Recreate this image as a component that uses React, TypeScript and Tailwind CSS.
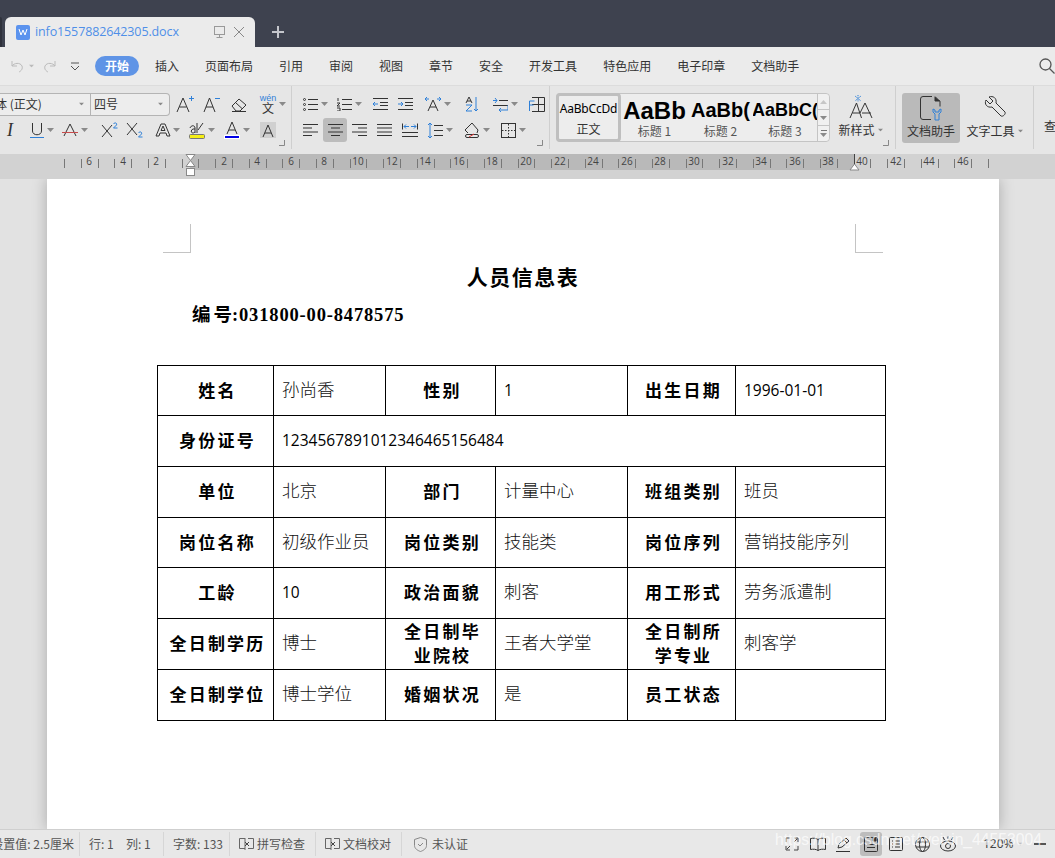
import type { ReactNode } from "react";

const cjk = "font-['Microsoft_YaHei','Noto_Sans_CJK_SC',sans-serif]";
const blue = "#2f80d8";
const ink = "#333";

function Ico({ w = 16, h = 16, children, className = "" }: { w?: number; h?: number; children: ReactNode; className?: string }) {
  return (
    <svg width={w} height={h} viewBox={`0 0 ${w} ${h}`} fill="none" stroke={ink} strokeWidth="1" className={`shrink-0 ${className}`}>
      {children}
    </svg>
  );
}

function Caret({ className = "" }: { className?: string }) {
  return (
    <svg width="7" height="4" viewBox="0 0 7 4" className={`shrink-0 ${className}`}>
      <path d="M0 0h7L3.5 4z" fill="#8a8a8a" />
    </svg>
  );
}

const menus = ["插入", "页面布局", "引用", "审阅", "视图", "章节", "安全", "开发工具", "特色应用", "电子印章", "文档助手"];

function TitleBar() {
  return (
    <div className="h-[47px] bg-[#3e424f] flex items-end shrink-0">
      <div className="w-[2px] h-[30px] bg-[#2f323c] rounded-tr" />
      <div className="ml-[3px] w-[250px] h-[30px] bg-[#ebebeb] rounded-t-[6px] flex items-center pl-[11px]">
        <div className="w-[14px] h-[15px] bg-[#5b93ee] rounded-[2px] flex items-center justify-center">
          <svg width="10" height="8" viewBox="0 0 10 8" fill="none" stroke="#fff" strokeWidth="1">
            <path d="M1 1l2 6 2-5 2 5 2-6" />
          </svg>
        </div>
        <span className="ml-[5px] w-[145px] text-[12.5px] leading-none whitespace-nowrap text-[#4f8fe8] font-['Open_Sans',sans-serif] tracking-[-0.12px]">info1557882642305.docx</span>
        <Ico w={13} h={14} className="ml-[33px]">
          <rect x="1.5" y="1.5" width="10" height="8" stroke="#999" />
          <path d="M6.5 9.5v3M3.5 12.5h6" stroke="#999" />
        </Ico>
        <Ico w={12} h={12} className="ml-[7px]">
          <path d="M1 1l10 10M11 1L1 11" stroke="#888" />
        </Ico>
      </div>
      <svg width="14" height="14" viewBox="0 0 14 14" className="ml-[16px] mb-[8px]" stroke="#c4c6cc" strokeWidth="2">
        <path d="M7 1v12M1 7h12" />
      </svg>
    </div>
  );
}

function MenuBar() {
  return (
    <div className={`relative h-[39px] bg-[#ebebeb] border-b border-[#dcdcdc] flex items-center shrink-0 text-[12px] text-[#333] ${cjk}`}>
      <Ico w={14} h={13} className="ml-[10px]">
        <path d="M2 1v5h5M2 6c2-3 8-4 10 0 1 3-1 5-3 6" stroke="#bbb" />
      </Ico>
      <Caret className="ml-[4px] scale-75 opacity-50" />
      <Ico w={14} h={13} className="ml-[8px]">
        <path d="M12 1v5H7M12 6c-2-3-8-4-10 0-1 3 1 5 3 6" stroke="#bbb" />
      </Ico>
      <Ico w={10} h={9} className="ml-[13px]">
        <path d="M1 1h8M1 4l4 4 4-4" stroke="#555" />
      </Ico>
      <div className="ml-[15px] w-[44px] h-[20px] rounded-full bg-[#5f94e6] text-white flex items-center justify-center font-bold">开始</div>
      <div className="ml-[16px] flex gap-[26px] whitespace-nowrap">
        {menus.map((m) => (
          <span key={m} className="shrink-0">{m}</span>
        ))}
      </div>
      <svg width="16" height="16" viewBox="0 0 16 16" fill="none" stroke="#555" strokeWidth="1.3" className="absolute left-[1039px] top-[11px]">
        <circle cx="6.5" cy="6.5" r="5.5" />
        <path d="M10.5 10.5l5 5" />
      </svg>
    </div>
  );
}

function FontRow() {
  return (
    <div className="flex items-center h-[24px]">
      <div className={`w-[170px] h-[23px] border border-l-0 border-[#b4b4b4] rounded-r-[4px] bg-[#ededed] flex items-center text-[12px] text-[#333] ${cjk}`}>
        <span className="w-[67px] -ml-[5px] whitespace-nowrap">体 (正文)</span>
        <Caret className="ml-[16px] mr-[5px] scale-75" />
        <div className="w-[79px] h-full border-l border-[#b4b4b4] flex items-center pl-[3px] pr-[5px] justify-between text-[12px]">
          四号
          <Caret className="scale-75" />
        </div>
      </div>
      <Ico w={19} h={18} className="ml-[6px]">
        <path d="M1 17L7 3l6 14M3.500 12h7" />
        <path d="M13 3.500h5M15.500 1v5" stroke={blue} />
      </Ico>
      <Ico w={18} h={18} className="ml-[8px]">
        <path d="M1 17L6.500 3 12 17M3 12h7" />
        <path d="M12 3.500h5" stroke={blue} />
      </Ico>
      <Ico w={16} h={15} className="ml-[10px]">
        <path d="M1 9l7-7 7 6-6 6H5z" />
        <path d="M4.500 5.500l6.500 6" />
        <path d="M1 14.500h14" />
      </Ico>
      <div className={`ml-[11px] w-[20px] text-center ${cjk}`}>
        <div className="text-[9px] text-[#2f80d8] font-['Liberation_Sans',sans-serif] leading-[8px]">wén</div>
        <div className="text-[12px] text-[#333] leading-[12px]">文</div>
      </div>
      <Caret className="ml-[1px]" />
    </div>
  );
}

function FormatRow() {
  return (
    <div className="flex items-center h-[24px] mt-[2px]">
      <span className="ml-[7px] w-[10px] font-['Liberation_Serif',serif] italic text-[18px] leading-[18px] text-[#333]">I</span>
      <Ico w={14} h={16} className="ml-[13px]">
        <path d="M2.500 1v8c0 5 9 5 9 0V1" />
        <path d="M0 15.500h14" stroke={blue} />
      </Ico>
      <Caret className="ml-[3px]" />
      <Ico w={16} h={16} className="ml-[8px]">
        <path d="M2 14L8 2l6 12" />
        <path d="M0 10.500h16" stroke="#c64b4b" />
      </Ico>
      <Caret className="ml-[3px]" />
      <Ico w={17} h={16} className="ml-[13px]">
        <path d="M1 3l10 12M11 3L1 15" />
        <path d="M12.500 2c1-2 4-1 3 1l-3 3h4" stroke={blue} />
      </Ico>
      <Ico w={17} h={16} className="ml-[8px]">
        <path d="M1 1l10 12M11 1L1 13" />
        <path d="M12.500 11c1-2 4-1 3 1l-3 3h4" stroke={blue} />
      </Ico>
      <Ico w={16} h={16} className="ml-[12px]">
        <path d="M1 14L6 2h4l5 12h-3l-1-3H5l-1 3zM6 8.500h4L8 4z" />
      </Ico>
      <Caret className="ml-[2px]" />
      <Ico w={16} h={17} className="ml-[9px]">
        <path d="M1 6c1-3 5-3 5 0v5M6 7c-4-1-5 4-2 4 1 0 2-1 2-1M8 1v10M14 1L9 8" />
        <rect x="0.500" y="12.500" width="15" height="4" rx="1" fill="#f5ee16" stroke="#777" />
      </Ico>
      <Caret className="ml-[3px]" />
      <div className="ml-[9px] w-[16px] h-[18px] flex flex-col items-center">
        <Ico w={12} h={13}>
          <path d="M1 13L6 1l5 12M3 9h6" />
        </Ico>
        <div className="w-[16px] h-[4px] mt-[1px] bg-[#0000e6] border border-white" />
      </div>
      <Caret className="ml-[3px]" />
      <div className="ml-[10px] w-[16px] h-[16px] bg-[#d0d0d0] flex items-center justify-center">
        <Ico w={12} h={13}>
          <path d="M1 13L6 1l5 12M3 9h6" />
        </Ico>
      </div>
    </div>
  );
}

function Launcher() {
  return (
    <svg width="6" height="6" viewBox="0 0 6 6" fill="none" stroke="#888" className="absolute right-[6px] bottom-[3px]">
      <path d="M0 5.500h5.500V0" />
    </svg>
  );
}

function ParaRow1() {
  return (
    <div className="flex items-center h-[24px]">
      <Ico w={15} h={14} className="ml-[11px]">
        <path d="M5 2.500h10M5 7.500h10M5 12.500h10" />
        <circle cx="1.500" cy="2.500" r="1" />
        <circle cx="1.500" cy="7.500" r="1" />
        <circle cx="1.500" cy="12.500" r="1" />
      </Ico>
      <Caret className="ml-[3px]" />
      <Ico w={15} h={14} className="ml-[9px]">
        <path d="M5 2.500h10M5 7.500h10M5 12.500h10M1 1v3M0 6h3L0 9h3M0 11h3v3H0" />
      </Ico>
      <Caret className="ml-[3px]" />
      <Ico w={15} h={12} className="ml-[11px]">
        <path d="M0 .5h15M7 4.500h8M7 7.500h8M0 11.500h15" />
        <path d="M5 6H0M2 4L0 6l2 2" stroke={blue} />
      </Ico>
      <Ico w={15} h={12} className="ml-[10px]">
        <path d="M0 .5h15M7 4.500h8M7 7.500h8M0 11.500h15" />
        <path d="M0 6h5M3 4l2 2-2 2" stroke={blue} />
      </Ico>
      <Ico w={16} h={16} className="ml-[12px]">
        <path d="M3 15L8 4l5 11M5 11h6" />
        <path d="M0 3h4M2 1L0 3l2 2M12 3h4M14 1l2 2-2 2" stroke={blue} />
      </Ico>
      <Caret className="ml-[3px]" />
      <Ico w={14} h={16} className="ml-[14px]">
        <path d="M1 7l3-6 3 6M2 5h4" />
        <path d="M1 9h6l-6 6h6" stroke={blue} />
        <path d="M11 1v14M9 13l2 2 2-2" stroke={blue} />
      </Ico>
      <Ico w={15} h={15} className="ml-[14px]">
        <path d="M6 3.500h9M0 8.500h15" />
        <path d="M0 3.500h4M2 1l2 2.500L2 6" stroke={blue} />
        <path d="M15 8v5H6M8 11l-2 2 2 2" stroke={blue} />
      </Ico>
      <Caret className="ml-[3px]" />
      <Ico w={16} h={15} className="ml-[11px]">
        <path d="M3 .5h12.500v14H3M9.500 .5v14M3 7.500h12.500" />
        <path d="M.5 4v10M.5 4h5M.5 8h4" stroke={blue} />
      </Ico>
    </div>
  );
}

function ParaRow2() {
  return (
    <div className="flex items-center h-[24px] mt-[2px]">
      <div className="ml-[11px]">
        <Ico w={15} h={12}>
          <path d="M0 .5h15M0 4h9M0 8h15M0 11.500h9" />
        </Ico>
      </div>
      <div className="ml-[5px] w-[24px] h-[24px] rounded-[3px] bg-[#bcbcbc] flex items-center justify-center">
        <Ico w={15} h={12}>
          <path d="M0 .5h15M3 4h9M0 8h15M3 11.500h9" />
        </Ico>
      </div>
      <Ico w={15} h={12} className="ml-[5px]">
        <path d="M0 .5h15M6 4h9M0 8h15M6 11.500h9" />
      </Ico>
      <Ico w={15} h={12} className="ml-[10px]">
        <path d="M0 .5h15M0 4h15M0 8h15M0 11.500h15" />
      </Ico>
      <Ico w={16} h={14} className="ml-[10px]">
        <path d="M.5 .5v6M15.500 .5v6M0 9.500h16M0 13.500h16" />
        <path d="M2 3.500h5M4 1.500l-2 2 2 2M9 3.500h5M12 1.500l2 2-2 2" stroke={blue} />
      </Ico>
      <Ico w={15} h={15} className="ml-[10px]">
        <path d="M6 2.500h9M6 7.500h9M6 12.500h9" />
        <path d="M2 0v15M0 2l2-2 2 2M0 13l2 2 2-2" stroke={blue} />
      </Ico>
      <Caret className="ml-[3px]" />
      <Ico w={16} h={16} className="ml-[11px]">
        <path d="M1 8l7-7 6 7-1 3M1 8l3 3" />
        <rect x="1.500" y="12.500" width="13" height="3" rx="1.500" />
        <path d="M5 15l5-3" stroke="#d33" />
      </Ico>
      <Caret className="ml-[3px]" />
      <Ico w={15} h={15} className="ml-[11px]">
        <rect x=".5" y=".5" width="14" height="14" />
        <path d="M7.500 1v13M1 7.500h13" strokeDasharray="1.500 1.500" />
      </Ico>
      <Caret className="ml-[3px]" />
    </div>
  );
}

function StyleGallery() {
  const heads = [
    { t: "AaBb", l: "标题 1", w: "w-[67px]", c: "text-[24px]" },
    { t: "AaBb(", l: "标题 2", w: "w-[65px]", c: "text-[20px]" },
    { t: "AaBbC(", l: "标题 3", w: "w-[64px]", c: "text-[18px]" },
  ];
  return (
    <div className={`ml-[6px] mt-[7px] w-[274px] h-[49px] flex border border-[#c4c4c4] rounded-[4px] bg-[#ededed] ${cjk}`}>
      <div className="w-[65px] -ml-px -mt-px h-[49px] border-[3px] border-[#bfbfbf] rounded-[4px] flex flex-col items-center shrink-0 overflow-hidden">
        <span className="mt-[5px] text-[12px] leading-[16px] font-['Noto_Sans',sans-serif] text-black whitespace-nowrap tracking-[-0.2px]">AaBbCcDd</span>
        <span className="mt-[5px] text-[12px] leading-[14px] text-[#333]">正文</span>
      </div>
      {heads.map((h) => (
        <div key={h.l} className={`${h.w} shrink-0 flex flex-col items-center overflow-hidden`}>
          <span className={`h-[29px] ${h.c} leading-[33px] font-bold font-['Liberation_Sans',sans-serif] text-black whitespace-nowrap`}>{h.t}</span>
          <span className="text-[12px] leading-[16px] text-[#555]">{h.l}</span>
        </div>
      ))}
      <div className="w-[12px] shrink-0 ml-auto border-l border-[#c4c4c4] flex flex-col bg-[#f0f0f0] rounded-r-[4px] divide-y divide-[#c4c4c4]">
        <div className="h-[16px] flex items-center justify-center">
          <Caret className="rotate-180 opacity-40" />
        </div>
        <div className="h-[16px] flex items-center justify-center">
          <Caret />
        </div>
        <div className="flex-1 flex flex-col items-center justify-center gap-[2px]">
          <div className="w-[6px] h-px bg-[#777]" />
          <Caret />
        </div>
      </div>
    </div>
  );
}

function Ribbon() {
  return (
    <div className="h-[68px] bg-[#e6e6e6] flex shrink-0 overflow-hidden">
      <div className="relative w-[292px] shrink-0 border-r border-[#cfcfcf] pt-[6px] mb-[5px]">
        <FontRow />
        <FormatRow />
        <Launcher />
      </div>
      <div className="relative w-[258px] shrink-0 border-r border-[#cfcfcf] pt-[6px] mb-[5px]">
        <ParaRow1 />
        <ParaRow2 />
        <Launcher />
      </div>
      <div className={`relative w-[346px] shrink-0 border-r border-[#cfcfcf] mb-[5px] flex ${cjk}`}>
        <StyleGallery />
        <div className="ml-[9px] mt-[8px] w-[44px] flex flex-col items-center">
          <Ico w={24} h={25}>
            <path d="M1 24L7.500 9l5 15M3.500 19h7.500M11 19l5-10 7 15M13 19h9" />
            <path d="M9 1v7M6 2l6 5M12 2L6 7" stroke={blue} strokeDasharray="1 .8" />
          </Ico>
          <div className="mt-[3px] flex items-center text-[12px] leading-[16px] text-[#333] whitespace-nowrap">
            新样式
            <Caret className="ml-[2px] scale-75" />
          </div>
        </div>
        <Launcher />
      </div>
      <div className={`relative w-[138px] shrink-0 border-r border-[#cfcfcf] mb-[5px] pl-[6px] pt-[7px] flex text-[12px] text-[#333] ${cjk}`}>
        <div className="w-[58px] h-[50px] rounded-[3px] bg-[#bababa] flex flex-col items-center pt-[3px]">
          <Ico w={22} h={25}>
            <path d="M12 .5H3A2.500 2.500 0 00.5 3v18A2.500 2.500 0 003 23.500h8M15 .5l5 5v5" />
            <path d="M15 1v4h5" fill="#333" />
            <path d="M13 13v3l2 2v6h4v-6l2-2v-3l-2 1v2h-4v-2z" stroke={blue} />
          </Ico>
          <span className="mt-[1px] leading-[17px] whitespace-nowrap">文档助手</span>
        </div>
        <div className="ml-[6px] w-[58px] flex flex-col items-center pt-[3px]">
          <Ico w={22} h={24}>
            <path d="M2 4l4 4 3-3-4-4c4-1.500 8 1 7 6l9 9c1 2-2 5-4 4l-9-9c-5 1-8-3-6-7z" />
          </Ico>
          <div className="mt-[2px] flex items-center leading-[17px] whitespace-nowrap">
            文字工具
            <Caret className="ml-[2px] scale-75" />
          </div>
        </div>
      </div>
      <div className={`pl-[10px] pt-[31px] text-[12px] leading-[17px] text-[#333] ${cjk}`}>查</div>
    </div>
  );
}

function Ruler() {
  const origin = 190;
  const ticks = Array.from({ length: 56 }, (_, k) => k - 7);
  const labels = Array.from({ length: 27 }, (_, k) => k - 3).filter((k) => k !== 0);
  return (
    <svg width="1055" height="25" viewBox="0 0 1055 25" className="block shrink-0 bg-[#d2d2d2]">
      <rect x="190" y="0" width="665" height="16" fill="#b9b9b9" />
      {ticks.map((i) => {
        const x = Math.round(origin + (i - 0.5) * 16.8) + 0.5;
        return <path key={i} d={`M${x} 5v9`} stroke="#777" />;
      })}
      {labels.map((k) => (
        <text key={k} x={Math.round(origin + k * 33.6)} y="11" textAnchor="middle" fontSize="10" fill="#444" fontFamily="'Open Sans',sans-serif">
          {Math.abs(k) * 2}
        </text>
      ))}
      <path d="M186 .5h9l-4.500 6 4.500 6h-9l4.500-6z" fill="#fff" stroke="#888" />
      <rect x="186.500" y="14.500" width="8" height="7" fill="#fff" stroke="#888" />
      <path d="M854.500 0v10" stroke="#444" />
      <path d="M850 16l4.500-6 4.500 6z" fill="#fff" stroke="#888" />
    </svg>
  );
}

type Cell = { t: string; label?: boolean; num?: boolean; span?: number };

const rows: Cell[][] = [
  [{ t: "姓名", label: true }, { t: "孙尚香" }, { t: "性别", label: true }, { t: "1", num: true }, { t: "出生日期", label: true }, { t: "1996-01-01", num: true }],
  [{ t: "身份证号", label: true }, { t: "1234567891012346465156484", num: true, span: 5 }],
  [{ t: "单位", label: true }, { t: "北京" }, { t: "部门", label: true }, { t: "计量中心" }, { t: "班组类别", label: true }, { t: "班员" }],
  [{ t: "岗位名称", label: true }, { t: "初级作业员" }, { t: "岗位类别", label: true }, { t: "技能类" }, { t: "岗位序列", label: true }, { t: "营销技能序列" }],
  [{ t: "工龄", label: true }, { t: "10", num: true }, { t: "政治面貌", label: true }, { t: "刺客" }, { t: "用工形式", label: true }, { t: "劳务派遣制" }],
  [{ t: "全日制学历", label: true }, { t: "博士" }, { t: "全日制毕\n业院校", label: true }, { t: "王者大学堂" }, { t: "全日制所\n学专业", label: true }, { t: "刺客学" }],
  [{ t: "全日制学位", label: true }, { t: "博士学位" }, { t: "婚姻状况", label: true }, { t: "是" }, { t: "员工状态", label: true }, { t: "" }],
];

const heights = ["h-[50px]", "h-[51px]", "h-[51px]", "h-[50px]", "h-[51px]", "h-[51px]", "h-[51px]"];

function InfoTable() {
  return (
    <table className={`mt-[38px] ml-[110px] w-[729px] table-fixed border-collapse border border-black ${cjk}`}>
      <colgroup>
        <col className="w-[116px]" />
        <col className="w-[112px]" />
        <col className="w-[110px]" />
        <col className="w-[132px]" />
        <col className="w-[108px]" />
        <col className="w-[150px]" />
      </colgroup>
      <tbody>
        {rows.map((r, i) => (
          <tr key={i} className={heights[i]}>
            {r.map((c, j) => (
              <td
                key={j}
                colSpan={c.span}
                className={
                  c.label
                    ? "border border-black text-center align-middle pl-[7px] pr-[3px] pb-[2px] text-[17px] leading-[24px] font-bold tracking-[2.2px] text-black whitespace-pre-line"
                    : c.num
                      ? "border border-black align-middle pl-[8px] text-[15.500px] font-['Open_Sans',sans-serif] text-black"
                      : "border border-black align-middle pl-[8px] pb-[3px] text-[17.500px] font-light text-[#111]"
                }
              >
                {c.t}
              </td>
            ))}
          </tr>
        ))}
      </tbody>
    </table>
  );
}

function Page() {
  return (
    <div className="flex-1 min-h-0 bg-[#e2e2e2] overflow-hidden">
      <div className="relative ml-[47px] w-[952px] h-full bg-white shadow-[0_0_14px_rgba(0,0,0,0.25)] pt-[83px] text-black">
        <div className="absolute left-[116px] top-[45px] w-[28px] h-[29px] border-r border-b border-[#c4c4c4]" />
        <div className="absolute left-[808px] top-[45px] w-[28px] h-[29px] border-l border-b border-[#c4c4c4]" />
        <h1 className={`text-center text-[21px] leading-[28px] font-bold tracking-[1.500px] ${cjk}`}>人员信息表</h1>
        <p className="mt-[13px] ml-[145px] text-[18.500px] leading-[24px] font-bold tracking-[0.84px] font-['Liberation_Serif','Noto_Sans_CJK_SC',serif]">
          <span className="tracking-[3px]">编</span><span className="tracking-[0px]">号</span>:031800-00-8478575
        </p>
        <InfoTable />
      </div>
    </div>
  );
}

function StatusBar() {
  const sep = "w-px h-[24px] bg-[#d6d6d6] shrink-0";
  const Box = () => (
    <Ico w={15} h={14}>
      <path d="M6 1.500H.5v10H6M9 1.500h5.500v10H9M6 1v12" stroke="#666" />
      <path d="M6 5l4 4M10 5L6 9" stroke="#444" />
    </Ico>
  );
  return (
    <div className={`relative h-[29px] bg-[#e8e8e8] border-t border-[#cfcfcf] flex items-center shrink-0 text-[12px] text-[#555] whitespace-nowrap overflow-hidden ${cjk}`}>
      <div className="w-[79px] pr-[5px] shrink-0 flex justify-end overflow-hidden">
        <span className="shrink-0">设置值: 2.5厘米</span>
      </div>
      <div className={sep} />
      <span className="ml-[9px] w-[37px] shrink-0">行: 1</span>
      <span className="w-[37px] shrink-0">列: 1</span>
      <div className={sep} />
      <span className="ml-[9px] w-[56px] shrink-0">字数: 133</span>
      <div className={sep} />
      <span className="ml-[9px]"><Box /></span>
      <span className="ml-[3px] w-[58px] shrink-0">拼写检查</span>
      <div className={sep} />
      <span className="ml-[9px]"><Box /></span>
      <span className="ml-[3px] w-[58px] shrink-0">文档校对</span>
      <div className={sep} />
      <Ico w={13} h={15} className="ml-[12px]">
        <path d="M6.500 .5l6 2v6c0 3-3 5-6 6-3-1-6-3-6-6v-6z" stroke="#888" />
        <path d="M4 7l2 2 3-3" stroke="#888" />
      </Ico>
      <span className="ml-[5px]">未认证</span>

      <div className="ml-auto flex items-center">
        <Ico w={14} h={14}>
          <path d="M1 5V1h4M9 1h4v4M13 9v4H9M5 13H1V9M2 12l3-3M12 2L9 5" stroke="#444" />
        </Ico>
        <Ico w={16} h={14} className="ml-[11px]">
          <path d="M8 2.500C6 1 3 1 .5 1.500v11c2.500-.5 5.500-.5 7.500 1 2-1.500 5-1.500 7.500-1v-11C13 1 10 1 8 2.500zM8 2.500v11" />
        </Ico>
        <Ico w={16} h={15} className="ml-[10px]">
          <path d="M2 11l1-4 7-6 3 3-7 6zM8 3l3 3" />
          <path d="M0 14.500h14" />
        </Ico>
        <div className="ml-[8px] w-[22px] h-[24px] rounded-[3px] bg-[#bdbdbd] flex items-center justify-center">
          <Ico w={14} h={15}>
            <path d="M.5 4V1.500A1 1 0 011.500 .5h11a1 1 0 011 1V13.500a1 1 0 01-1 1h-11a1 1 0 01-1-1V4M3 7.500h8M3 10.500h8" />
            <path d="M9 1l3 0v3h-3z" fill="#333" />
          </Ico>
        </div>
        <Ico w={14} h={14} className="ml-[7px]">
          <rect x=".5" y=".5" width="13" height="13" rx="1" />
          <path d="M3 4h1M6 4h5M3 7h1M6 7h5M3 10h1M6 10h5" />
        </Ico>
        <Ico w={15} h={15} className="ml-[12px]">
          <circle cx="7.500" cy="7.500" r="7" />
          <ellipse cx="7.500" cy="7.500" rx="3" ry="7" />
          <path d="M1 5h13M1 10h13" />
        </Ico>
        <Ico w={16} h={16} className="ml-[10px]">
          <ellipse cx="8" cy="10" rx="7.500" ry="5" />
          <circle cx="8" cy="10" r="2.500" />
          <path d="M3 1l1.500 3M8 .5V3M13 1l-1.500 3" />
        </Ico>
        <span className="ml-[27px] w-[31px] text-[12px] font-['Noto_Sans',sans-serif] text-[#444]">120%</span>
        <Caret className="ml-[3px] scale-75 opacity-60" />
        <div className="ml-[10px] mr-[9px] w-[12px] h-[2px] bg-[#555]" />
      </div>
      <div className="absolute left-[775px] top-[0px] text-[15.700px] leading-[20px] text-white/70 font-['Liberation_Sans',sans-serif]">
        https://blog.csdn.net/weixin_44553004
      </div>
    </div>
  );
}

export default function App() {
  return (
    <div className="w-[1055px] h-[858px] flex flex-col overflow-hidden bg-[#e2e2e2]">
      <TitleBar />
      <MenuBar />
      <Ribbon />
      <Ruler />
      <Page />
      <StatusBar />
    </div>
  );
}
